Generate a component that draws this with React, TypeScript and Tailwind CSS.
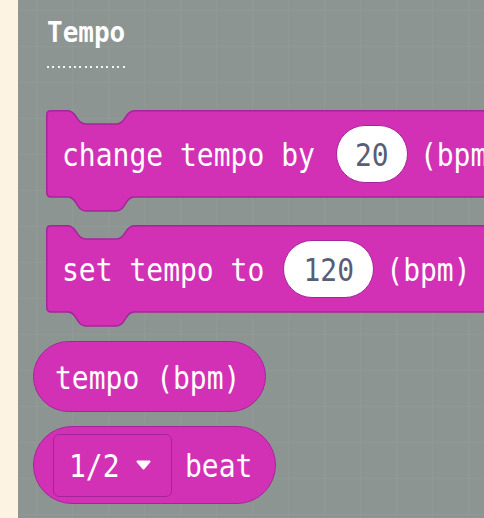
import React from "react";

const FILL = "#d231b6";
const STROKE = "#a6249b";
const MONO = "font-['DejaVu_Sans_Mono','Liberation_Mono',monospace]";
const TXT = "inline-block scale-y-[1.15] translate-y-[2px]";

function StatementShape({ width, height }: { width: number; height: number }) {
  const W = width;
  const H = height;
  const r = 5;
  const d = [
    `M ${r} 0.75`,
    `L 22 0.75`,
    `C 31 0.75 30 14 40 14`,
    `L 70 14`,
    `C 80 14 79 0.75 88 0.75`,
    `L ${W} 0.75`,
    `L ${W} ${H}`,
    `L 88 ${H}`,
    `C 79 ${H} 80 ${H + 14} 70 ${H + 14}`,
    `L 40 ${H + 14}`,
    `C 30 ${H + 14} 31 ${H} 22 ${H}`,
    `L ${r} ${H}`,
    `Q 0.75 ${H} 0.75 ${H - r}`,
    `L 0.75 ${r}`,
    `Q 0.75 0.75 ${r} 0.75`,
    "Z",
  ].join(" ");
  return (
    <svg
      className="absolute left-0 top-0 overflow-visible"
      width={W}
      height={H + 15}
      viewBox={`0 0 ${W} ${H + 15}`}
    >
      <path d={d} fill={FILL} stroke={STROKE} strokeWidth={1.5} strokeLinejoin="round" />
    </svg>
  );
}

function Pill({ value, width }: { value: string; width: string }) {
  return (
    <div
      className={`${width} h-[58px] rounded-full bg-white border-[1.5px] border-[#a6249b] flex items-center justify-center text-[#575e75] text-[28px] leading-none`}
    >
      <span className={TXT}>{value}</span>
    </div>
  );
}

export default function App() {
  return (
    <div className={`flex w-[484px] h-[518px] overflow-hidden ${MONO}`}>
      <div className="w-[18px] shrink-0 bg-[#fdf3e3]" />
      <div className="flex-1 bg-[#8c9592] bg-[linear-gradient(to_right,rgba(255,255,255,0.035)_1px,transparent_1px),linear-gradient(to_bottom,rgba(255,255,255,0.035)_1px,transparent_1px)] bg-[size:36px_36px] bg-[position:18px_10px] flex flex-col">
        <div className="ml-[29px] mt-[19px] text-[26px] leading-none font-bold text-white">
          <span className="inline-block scale-y-[1.1]">Tempo</span>
        </div>
        <div className="ml-[29px] mt-[21px] w-[80px] h-[2px] bg-[repeating-linear-gradient(90deg,#ffffff_0_2px,transparent_2px_5.4px)] opacity-90" />

        {/* change tempo by */}
        <div className="relative ml-[28px] mt-[42px] w-[460px] h-[87px] shrink-0">
          <StatementShape width={460} height={87} />
          <div className="relative h-full flex items-center pl-[16px] text-white text-[28px] leading-none whitespace-nowrap">
            <span className={TXT}>change tempo by</span>
            <div className="ml-[21px]">
              <Pill value="20" width="w-[72px]" />
            </div>
            <span className={`ml-[12px] ${TXT}`}>(bpm)</span>
          </div>
        </div>

        {/* set tempo to */}
        <div className="relative ml-[28px] mt-[28px] w-[442px] h-[87px] shrink-0">
          <StatementShape width={442} height={87} />
          <div className="relative h-full flex items-center pl-[16px] text-white text-[28px] leading-none whitespace-nowrap">
            <span className={TXT}>set tempo to</span>
            <div className="ml-[19px]">
              <Pill value="120" width="w-[91px]" />
            </div>
            <span className={`ml-[12px] ${TXT}`}>(bpm)</span>
          </div>
        </div>

        {/* tempo (bpm) reporter */}
        <div className="ml-[15px] mt-[29px] w-[233px] h-[71px] shrink-0 rounded-full bg-[#d231b6] border-[1.5px] border-[#a6249b] flex items-center pl-[21px] text-white text-[28px] leading-none whitespace-nowrap">
          <span className={TXT}>tempo (bpm)</span>
        </div>

        {/* 1/2 beat reporter */}
        <div className="ml-[15px] mt-[14px] w-[243px] h-[78px] shrink-0 rounded-full bg-[#d231b6] border-[1.5px] border-[#a6249b] flex items-center pl-[19px] text-white text-[28px] leading-none whitespace-nowrap">
          <div className="w-[119px] h-[63px] rounded-[6px] border-[1.5px] border-[#a6249b] flex items-center pl-[15px]">
            <span className={TXT}>1/2</span>
            <svg className="ml-[16px]" width="15" height="10" viewBox="0 0 15 10">
              <path d="M1.5 1.5 L13.5 1.5 L7.5 8.5 Z" fill="#ffffff" stroke="#ffffff" strokeWidth="2" strokeLinejoin="round" />
            </svg>
          </div>
          <span className={`ml-[13px] ${TXT}`}>beat</span>
        </div>
      </div>
    </div>
  );
}
